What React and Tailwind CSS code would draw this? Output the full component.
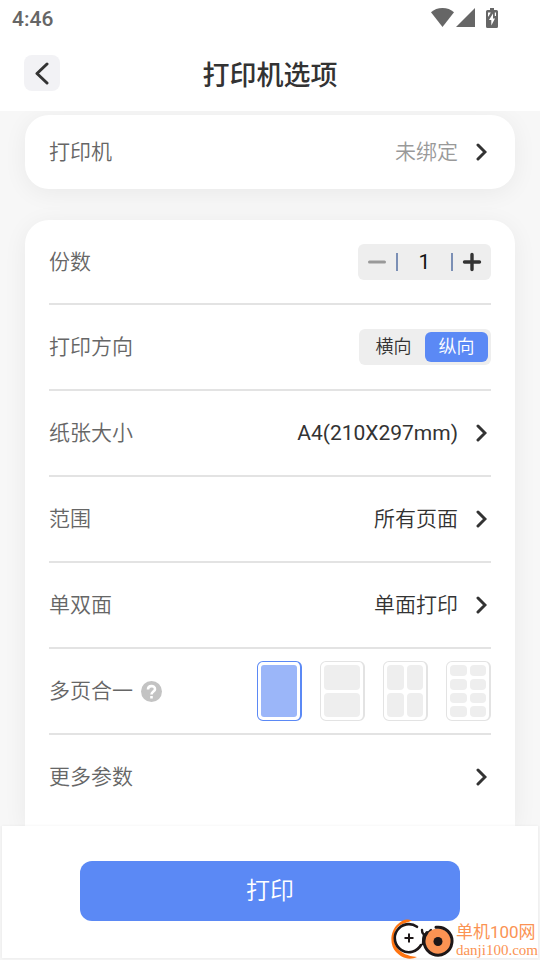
const pageLayouts = [
  { id: 'one', label: '1页', cells: 1, grid: 'grid-cols-1 grid-rows-1 gap-[3px]', cell: 'rounded-[3px]' },
  { id: 'two', label: '2页', cells: 2, grid: 'grid-cols-1 grid-rows-2 gap-[3px]', cell: 'rounded-[4px]' },
  { id: 'four', label: '4页', cells: 4, grid: 'grid-cols-2 grid-rows-2 gap-[3px]', cell: 'rounded-[4px]' },
  { id: 'eight', label: '8页', cells: 8, grid: 'grid-cols-2 grid-rows-4 gap-[3px]', cell: 'rounded-[4px]' },
];

function StatusBar() {
  return (
    <div className="flex h-[35px] items-center justify-between pl-3 pr-[42px] font-['Roboto',sans-serif] text-[#666666]">
      <span className="pt-0.5 text-[21px] font-medium">4:46</span>
      <div className="flex items-center">
        <svg className="h-[19px] w-[23px]" viewBox="0 0 23 19" fill="currentColor">
          <path d="M0 4.200C3 1.500 7 0 11.500 0S20 1.500 23 4.200L11.500 19Z" />
        </svg>
        <svg className="ml-0.5 h-[19px] w-[19px]" viewBox="0 0 19 19" fill="currentColor">
          <path d="M19 0V19H0Z" />
        </svg>
        <svg className="ml-[11px] h-5 w-3" viewBox="0 0 12 20">
          <path fill="currentColor" d="M4 0h4v2h2.500Q12 2 12 3.500v15Q12 20 10.500 20h-9Q0 20 0 18.500v-15Q0 2 1.500 2H4Z" />
          <path fill="#fff" d="M7 5.500 3 12H5.300V17.500L9 10.500H7ZM2 4.500H4.800L2.500 8.500H2ZM8.800 4.500H10V8H8.800Z" />
        </svg>
      </div>
    </div>
  );
}

function Chevron() {
  return (
    <svg className="mr-1 ml-[18px] h-[18px] w-[11px] shrink-0 text-[#333333]" viewBox="0 0 11 18" fill="none" stroke="currentColor" strokeWidth="3" strokeLinecap="round">
      <path d="M2 2 9 9 2 16" />
    </svg>
  );
}

function LinkRow({ label, value, valueClass = 'text-[#333333]' }) {
  return (
    <button type="button" className="flex w-full items-center justify-between text-left">
      <span>{label}</span>
      <span className="flex items-center">
        <span className={valueClass}>{value}</span>
        <Chevron />
      </span>
    </button>
  );
}

function Row({ children }) {
  return (
    <li className="flex min-h-[86px] items-center justify-between border-t-2 border-[#e3e3e3] first:min-h-[83px] first:border-t-0">
      {children}
    </li>
  );
}

function Stepper() {
  return (
    <div className="flex h-9 w-[133px] items-center justify-between rounded-md bg-[#eeeeee] px-[9px]">
      <button type="button" aria-label="减少" className="text-[#999999]">
        <svg className="size-5" viewBox="0 0 20 20" fill="none" stroke="currentColor" strokeWidth="3" strokeLinecap="round">
          <path d="M2.500 10h15" />
        </svg>
      </button>
      <span className="h-[18px] w-0.5 bg-[#7b8fb5]" />
      <input aria-label="份数" defaultValue="1" inputMode="numeric" className="w-9 bg-transparent text-center font-normal text-[#111111] outline-none" />
      <span className="h-[18px] w-0.5 bg-[#7b8fb5]" />
      <button type="button" aria-label="增加" className="text-[#333333]">
        <svg className="size-5" viewBox="0 0 20 20" fill="none" stroke="currentColor" strokeWidth="3.400" strokeLinecap="round">
          <path d="M2.500 10h15M10 2.500v15" />
        </svg>
      </button>
    </div>
  );
}

function LayoutOption({ layout, selected }) {
  return (
    <button
      type="button"
      aria-label={layout.label}
      aria-pressed={selected}
      className={`grid h-[60px] w-[45px] rounded-md border border-r-2 p-[3px] ${layout.grid} ${selected ? 'border-[#5b89f5]' : 'border-[#e3e3e3]'}`}
    >
      {Array.from({ length: layout.cells }, (_, i) => (
        <span key={i} className={`${layout.cell} ${selected ? 'bg-[#9bb6f9]' : 'bg-[#eeeeee]'}`} />
      ))}
    </button>
  );
}

function SiteMark() {
  return (
    <div className="absolute right-0.5 bottom-0 flex items-end gap-0.5 text-[#fb9353]">
      <svg className="h-[42px] w-16" viewBox="0 0 64 42" fill="none">
        <path d="M22 2.500C16 0 12 2.500 8 6C-1 14 0 28 6 34C11 39 18 43 27 39C17 38 12 35 8 31C2 24 3 13 9 8C13 5 17 5 22 2.500Z" fill="#ff7411" />
        <path d="M27 8.800A14 14 0 1 0 31 27" stroke="#1d1718" strokeWidth="2.600" strokeLinecap="round" />
        <path d="M19 15.500v9M14.500 20h9" stroke="#1d1718" strokeWidth="2" />
        <path d="M32 12C32 16 34 17 36 16C38 16 40 13 41 12M34 17C33 20 33 23 33 26" stroke="#1d1718" strokeWidth="2.400" strokeLinecap="round" />
        <circle cx="48" cy="23.500" r="13" fill="#fb9353" />
        <path d="M46 9.300A14 14 0 1 1 37 14.500" stroke="#1d1718" strokeWidth="3" strokeLinecap="round" />
        <circle cx="48" cy="23.500" r="4.500" fill="#1d1718" />
      </svg>
      <div className="flex flex-col pb-0.5 font-normal">
        <span className="text-[17px] leading-5">单机100网</span>
        <span className="font-['Liberation_Serif',serif] text-[15px] leading-4">danji100.com</span>
      </div>
    </div>
  );
}

export default function App() {
  return (
    <div className="flex min-h-screen flex-col bg-[#f7f7f7] font-['Roboto','Noto_Sans_CJK_SC',sans-serif] text-[21px] leading-[30px] font-[350] text-[#666666]">
      <header className="bg-white">
        <StatusBar />
        <div className="grid h-[76px] grid-cols-[36px_1fr_36px] items-center px-6">
          <button type="button" aria-label="返回" className="flex size-9 items-center justify-center rounded-lg bg-[#f2f2f5] text-[#333333]">
            <svg className="h-[23px] w-[14px]" viewBox="0 0 14 23" fill="none" stroke="currentColor" strokeWidth="3" strokeLinecap="round" strokeLinejoin="round">
              <path d="M12 2 2 11.500 12 21" />
            </svg>
          </button>
          <h1 className="pt-1.5 text-center text-[27px] font-medium text-[#333333]">打印机选项</h1>
        </div>
      </header>

      <main className="flex flex-1 flex-col gap-[31px] overflow-hidden px-[25px] pt-1">
        <section className="flex min-h-[74px] rounded-3xl bg-white px-6 shadow-[0_4px_24px_rgba(0,0,0,0.06)]">
          <LinkRow label="打印机" value="未绑定" valueClass="text-[#999999]" />
        </section>

        <section className="flex-1 rounded-t-3xl bg-white px-6 shadow-[0_4px_24px_rgba(0,0,0,0.06)]">
          <ul>
            <Row>
              <span>份数</span>
              <Stepper />
            </Row>
            <Row>
              <span>打印方向</span>
              <div className="flex h-9 w-[132px] rounded-md bg-[#eeeeee] p-[3px] text-lg text-[#333333]">
                <button type="button" aria-pressed="false" className="flex-1">横向</button>
                <button type="button" aria-pressed="true" className="w-[63px] rounded-md bg-[#5b89f5] text-white">纵向</button>
              </div>
            </Row>
            <Row>
              <LinkRow label="纸张大小" value="A4(210X297mm)" valueClass="font-normal text-[#333333]" />
            </Row>
            <Row>
              <LinkRow label="范围" value="所有页面" />
            </Row>
            <Row>
              <LinkRow label="单双面" value="单面打印" />
            </Row>
            <Row>
              <div className="flex items-center gap-2">
                <span>多页合一</span>
                <button type="button" aria-label="帮助" className="flex size-[21px] items-center justify-center rounded-full bg-[#c3c3c3] text-white">
                  <svg className="size-[21px]" viewBox="0 0 21 21" fill="none" stroke="currentColor" strokeWidth="2.600">
                    <path d="M7 8.500C7 4 14 4 14 8.200c0 2.300-3.500 2.500-3.500 5.300M10.500 15v2.600" />
                  </svg>
                </button>
              </div>
              <div className="flex gap-[18px]">
                {pageLayouts.map((layout) => (
                  <LayoutOption key={layout.id} layout={layout} selected={layout.id === 'one'} />
                ))}
              </div>
            </Row>
            <Row>
              <LinkRow label="更多参数" />
            </Row>
          </ul>
        </section>
      </main>

      <footer className="relative bg-[#f5f5f5] px-0.5 pb-0.5">
        <div className="flex bg-white px-[78px] pt-[35px] pb-[37px] shadow-[0_0_3px_rgba(0,0,0,0.06)]">
          <button type="button" className="h-[60px] flex-1 rounded-xl bg-[#5b89f5] text-2xl text-white">打印</button>
        </div>
        <SiteMark />
      </footer>
    </div>
  );
}
